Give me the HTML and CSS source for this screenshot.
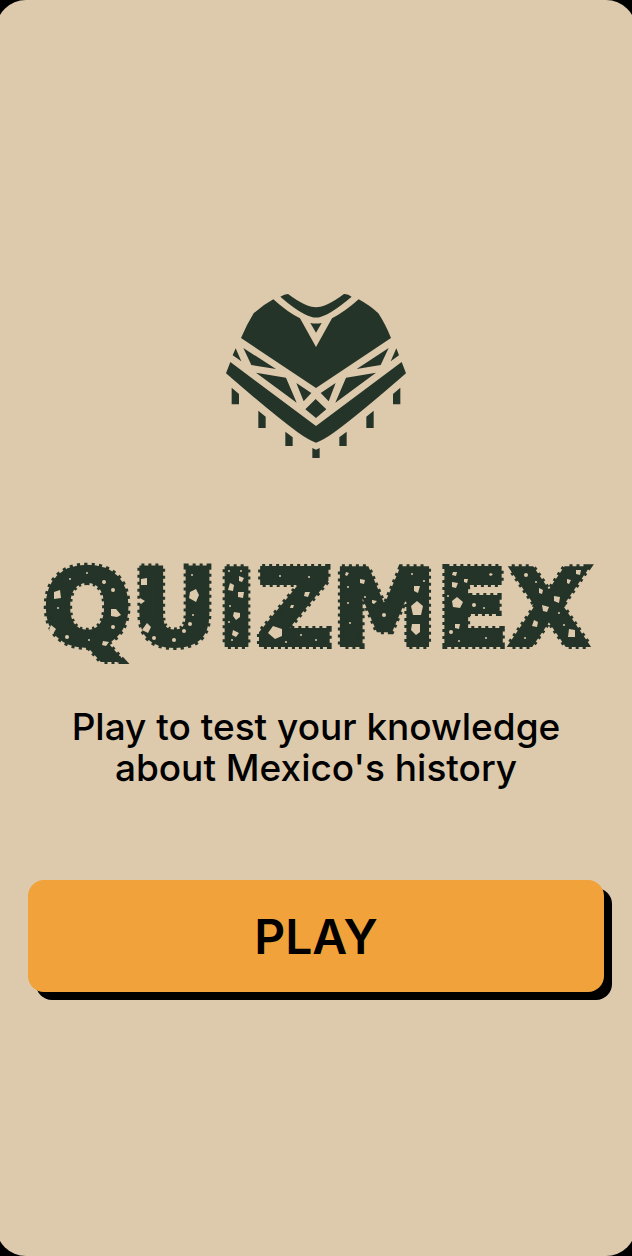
FILE: index.html
```html
<!DOCTYPE html>
<html lang="en">
<head>
<meta charset="utf-8">
<meta name="viewport" content="width=device-width, initial-scale=1">
<title>Quizmex</title>
<link rel="stylesheet" href="styles.css">
</head>
<body>
<main class="screen">
  <svg class="logo" viewBox="0 0 600 552" aria-hidden="true">
    <path d="M193 38Q205 30 216 30Q270 70 300 70Q330 70 384 30Q396 29 407 38Q345 90 315 98Q300 103 285 98Q250 88 193 38Z"/>
    <path d="M172 46Q215 85 252 103L300 189L348 103Q387 83 428 46Q463 65 487 88Q508 120 525 162L300 312L75 162Q93 120 113 88Q142 62 172 46Z"/>
    <path d="M283 117Q300 120 317 117L300 146Z"/>
    <path d="M82 192L180 255L106 243ZM518 192L422 255L494 243ZM59 193L76 232L50 214ZM541 193L524 232L549 214ZM120 266L210 281L242 356ZM480 266L390 281L358 356ZM241 297L286 327L263 352ZM359 297L314 327L338 352ZM299 345L331 376L300 402L268 376Z"/>
    <path d="M43 234L300 426L557 234L570 268Q430 390 355 445Q320 470 300 476Q280 470 245 445Q170 390 30 268Z"/>
    <path d="M47 311L69 330V361H47ZM553 311L531 330V361H553ZM127 380L149 398V432H127ZM473 380L451 398V432H473ZM208 443L230 460V486H208ZM392 443L370 460V486H392ZM289 492L300 497L311 492V522H289Z"/>
  </svg>

  <h1 class="title">
    <svg class="wordmark" viewBox="0 -10 572 130">
      <g class="body"><text id="word" x="286" y="90" text-anchor="middle">QUIZMEX</text></g>
      <use class="spines" href="#word"/>
      <g class="holes">
        <path d="M24 37L30 35L31 43L24 44ZM81 54L86 54L91 60L87 62L81 61ZM21 70L26 74L23 79L19 75ZM73 86L79 87L76 91L72 90Z"/>
        <path d="M111 24L117 23L117 30L111 30ZM160 37L166 34L169 40L166 47L159 43ZM117 68L121 72L118 78L112 75ZM110 43L115 46L111 49L108 46Z"/>
        <path d="M200 28L204 30L203 36L198 35ZM209 21L214 23L212 27L209 26ZM208 37L214 37L213 43L208 42ZM204 57L210 58L210 62L206 65L203 61ZM203 75L209 78L206 82L202 80Z"/>
        <path d="M243 71L252 74L252 81L245 84L238 78ZM275 37L280 37L278 42L274 41ZM261 50L264 50L263 53L260 53Z"/>
        <path d="M316 17L319 18L317 21L315 20ZM330 24L335 25L334 29L330 28ZM342 45L347 46L344 49L342 48ZM384 31L390 31L388 38L384 36ZM387 46L393 51L391 60L383 60L381 51ZM382 69L390 69L390 77L386 80L381 75Z"/>
        <path d="M427 42L433 47L430 53L423 52L422 46ZM422 27L428 28L426 33L422 32ZM423 17L427 17L426 21L422 20ZM434 24L438 24L437 28L434 27ZM425 69L430 69L429 74L425 73ZM460 18L463 19L461 21L459 20Z"/>
        <path d="M546 15L551 15L550 20L546 19ZM537 24L541 25L539 29L537 28ZM509 33L513 35L512 39L509 38ZM524 41L530 42L529 48L524 46ZM512 50L519 52L517 57L513 56ZM504 65L508 67L507 72L502 71ZM539 74L545 75L545 82L538 82Z"/>
        <circle cx="40" cy="24" r="1"/><circle cx="57" cy="18" r="1"/><circle cx="74" cy="27" r="2"/><circle cx="83" cy="35" r="2"/><circle cx="28" cy="53" r="1"/><circle cx="83" cy="72" r="2"/><circle cx="37" cy="82" r="2"/><circle cx="59" cy="85" r="1"/><circle cx="162" cy="20" r="1"/><circle cx="163" cy="60" r="1"/><circle cx="160" cy="69" r="2"/><circle cx="154" cy="76" r="2"/><circle cx="144" cy="85" r="2"/><circle cx="124" cy="83" r="2"/><circle cx="199" cy="16" r="1"/><circle cx="211" cy="16" r="1"/><circle cx="200" cy="51" r="1"/><circle cx="199" cy="67" r="1"/><circle cx="202" cy="85" r="1"/><circle cx="250" cy="21" r="1"/><circle cx="279" cy="22" r="1"/><circle cx="271" cy="80" r="1"/><circle cx="256" cy="87" r="1"/><circle cx="286" cy="85" r="1"/><circle cx="318" cy="48" r="1"/><circle cx="318" cy="32" r="1"/><circle cx="335" cy="42" r="1"/><circle cx="354" cy="60" r="2"/><circle cx="320" cy="68" r="1"/><circle cx="382" cy="19" r="1"/><circle cx="394" cy="26" r="1"/><circle cx="418" cy="41" r="1"/><circle cx="444" cy="50" r="2"/><circle cx="454" cy="53" r="1"/><circle cx="421" cy="77" r="2"/><circle cx="456" cy="83" r="1"/><circle cx="429" cy="86" r="1"/><circle cx="496" cy="20" r="2"/><circle cx="506" cy="27" r="1"/><circle cx="529" cy="58" r="1"/><circle cx="495" cy="83" r="1"/><circle cx="534" cy="70" r="1"/>
      </g>
    </svg>
  </h1>

  <p class="tagline">Play to test your knowledge about Mexico's history</p>
  <button class="play" type="button">PLAY</button>
</main>
</body>
</html>
```
FILE: styles.css
```css
* {
  box-sizing: border-box;
}

html {
  background: #000;
}

body {
  margin: 0;
  overflow-x: hidden;
  font-family: Inter, "Open Sans", sans-serif;
  color: #000;
}

.screen {
  display: flex;
  flex-direction: column;
  align-items: center;
  min-height: 100vh;
  margin: 0 -4px;
  padding: 284px 32px 40px;
  border-radius: 30px;
  background: #ddcaad;
}

.logo {
  width: 200px;
  fill: #253428;
}

.title {
  width: 100%;
  max-width: 572px;
  margin: 77px 0 0;
}

.wordmark {
  display: block;
  width: 100%;
  overflow: visible;
  font-family: "DejaVu Sans", sans-serif;
  font-size: 105px;
  font-weight: 700;
  fill: #253428;
  stroke: #253428;
}

.body {
  stroke-width: 4px;
}

.spines {
  fill: none;
  stroke-width: 8px;
  stroke-dasharray: 3 4;
}

.holes {
  fill: #ddcaad;
  stroke: none;
}

.tagline {
  max-width: 540px;
  margin: 31px 0 0;
  font-size: 37px;
  font-weight: 500;
  line-height: 41px;
  text-align: center;
}

.play {
  align-self: stretch;
  height: 112px;
  margin: 92px 0 0;
  border: 0;
  border-radius: 16px;
  background: #f1a23a;
  box-shadow: 8px 8px 0 #000;
  color: #000;
  font: 600 48px Inter, "Open Sans", sans-serif;
}
```
